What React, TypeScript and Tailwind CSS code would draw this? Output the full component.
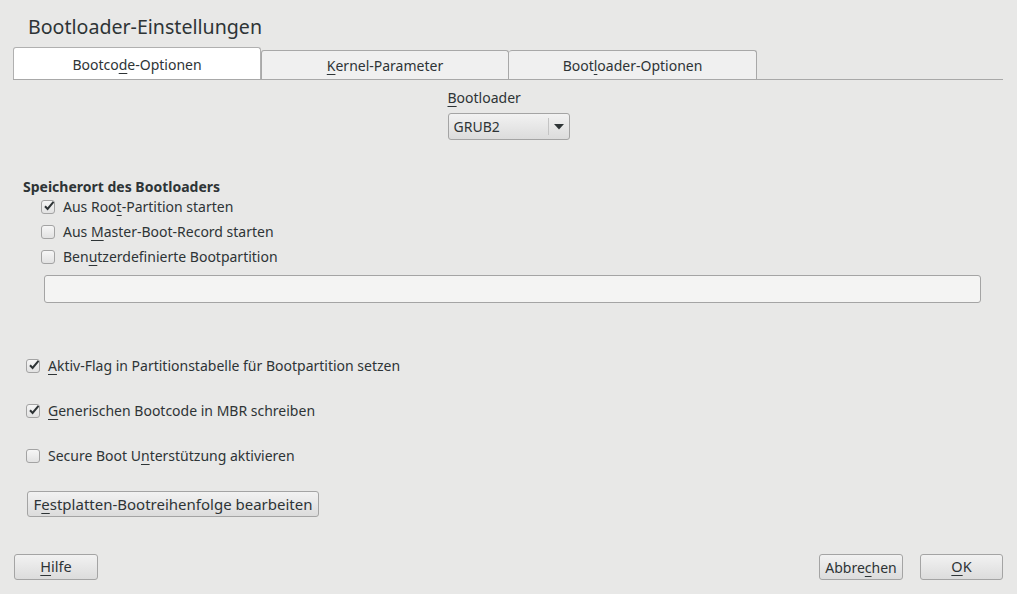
import React from "react";

const U = ({ children }: { children: React.ReactNode }) => (
  <span className="underline decoration-1 underline-offset-[3px]">{children}</span>
);

const Check = ({ checked }: { checked?: boolean }) => (
  <span className="relative inline-flex h-[14px] w-[14px] shrink-0 items-center justify-center rounded-[3px] border border-[#a3a3a3] bg-gradient-to-b from-[#f6f6f6] to-[#e2e2e2]">
    {checked && (
      <svg width="12" height="12" viewBox="0 0 12 12" className="absolute left-[1px] top-[-1px]">
        <path d="M2 6.2 L4.6 9 L10.5 1.8" stroke="#2e3436" strokeWidth="2" fill="none" />
      </svg>
    )}
  </span>
);

const Row = ({ checked, children, cls }: { checked?: boolean; children: React.ReactNode; cls?: string }) => (
  <div className={"flex h-[20px] items-center gap-[8px] " + (cls || "")}>
    <Check checked={checked} />
    <span>{children}</span>
  </div>
);

const Btn = ({ children, cls }: { children: React.ReactNode; cls?: string }) => (
  <div
    className={
      "flex h-[26px] items-center justify-center rounded-[3px] border border-[#a4a4a4] bg-gradient-to-b from-[#f2f2f2] to-[#dcdcdc] text-[#2e3436] " +
      (cls || "")
    }
  >
    {children}
  </div>
);

export default function App() {
  return (
    <div
      className="flex h-[594px] w-[1017px] flex-col bg-[#e8e8e7] text-[14px] text-[#2e3436]"
      style={{ fontFamily: '"Noto Sans", "Open Sans", sans-serif' }}
    >
      <div className="pl-[28px] pt-[13px] text-[19.6px] leading-[28px] text-[#2e3436]">Bootloader-Einstellungen</div>

      {/* Tabs */}
      <div className="ml-[13px] mr-[14px] mt-[7px] flex h-[32px] items-end border-b border-[#a8a8a8]">
        <div className="flex h-[32px] w-[248px] items-center justify-center rounded-t-[3px] border border-b-0 border-[#b0b0b0] bg-white pt-[2px]">
          Bootco<U>d</U>e-Optionen
        </div>
        <div className="flex h-[29px] w-[248px] items-center justify-center rounded-t-[3px] border border-b-0 border-[#a8a8a8] bg-[#f0f0f0]">
          <U>K</U>ernel-Parameter
        </div>
        <div className="flex h-[29px] w-[248px] items-center justify-center rounded-t-[3px] border border-b-0 border-l-0 border-[#a8a8a8] bg-[#f0f0f0]">
          Boot<U>l</U>oader-Optionen
        </div>
      </div>

      {/* Bootloader combo */}
      <div className="mt-[8px] flex justify-center">
        <div className="flex flex-col items-start">
          <div className="leading-[20px]">
            <U>B</U>ootloader
          </div>
          <div className="mt-[5px] flex h-[27px] w-[122px] items-center rounded-[3px] border border-[#a4a4a4] bg-gradient-to-b from-[#f2f2f2] to-[#dcdcdc]">
            <span className="flex-1 pl-[5px]">GRUB2</span>
            <span className="h-[17px] w-px bg-[#c4c4c4]" />
            <span className="flex w-[20px] items-center justify-center">
              <svg width="10" height="6" viewBox="0 0 10 6">
                <path d="M0 0 H10 L5 5.5 Z" fill="#2e3436" />
              </svg>
            </span>
          </div>
        </div>
      </div>

      {/* Speicherort */}
      <div className="ml-[23px] mt-[37px] font-bold leading-[20px]">Speicherort des Bootloaders</div>
      <div className="ml-[41px] flex flex-col gap-[5px] leading-[20px]">
        <Row checked>
          Aus Roo<U>t</U>-Partition starten
        </Row>
        <Row>
          Aus <U>M</U>aster-Boot-Record starten
        </Row>
        <Row>
          Ben<U>u</U>tzerdefinierte Bootpartition
        </Row>
      </div>
      <div className="ml-[44px] mt-[8px] h-[28px] w-[937px] rounded-[3px] border border-[#a4a4a4] bg-[#f4f4f3]" />

      <div className="ml-[26px] mt-[53px] flex flex-col gap-[25px] leading-[20px]">
        <Row checked>
          <U>A</U>ktiv-Flag in Partitionstabelle für Bootpartition setzen
        </Row>
        <Row checked>
          <U>G</U>enerischen Bootcode in MBR schreiben
        </Row>
        <Row>
          Secure Boot U<U>n</U>terstützung aktivieren
        </Row>
      </div>

      <div className="ml-[27px] mt-[25px] flex">
        <Btn cls="w-[292px] text-[15px]">
          F<U>e</U>stplatten-Bootreihenfolge bearbeiten
        </Btn>
      </div>

      <div className="mt-auto mb-[14px] flex items-center px-[14px]">
        <Btn cls="w-[84px] text-[14.5px]">
          <U>H</U>ilfe
        </Btn>
        <div className="flex-1" />
        <Btn cls="w-[84px] text-[14px]">
          Abbre<U>c</U>hen
        </Btn>
        <Btn cls="ml-[17px] w-[83px] text-[14.5px]">
          <U>O</U>K
        </Btn>
      </div>
    </div>
  );
}
